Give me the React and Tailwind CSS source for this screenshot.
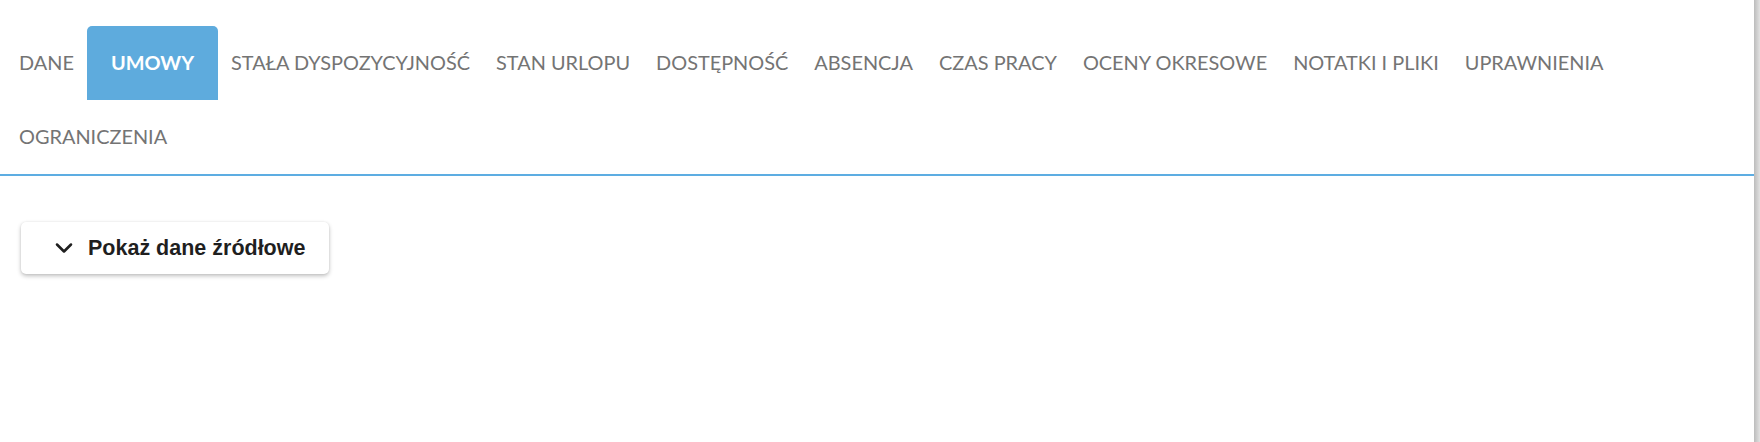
import { ChevronDown } from "lucide-react";

const tabs = [
  "DANE",
  "UMOWY",
  "STAŁA DYSPOZYCYJNOŚĆ",
  "STAN URLOPU",
  "DOSTĘPNOŚĆ",
  "ABSENCJA",
  "CZAS PRACY",
  "OCENY OKRESOWE",
  "NOTATKI I PLIKI",
  "UPRAWNIENIA",
  "OGRANICZENIA",
];

export default function App() {
  const active = "UMOWY";

  return (
    <div className="flex h-[442px] w-full bg-white font-['Lato',sans-serif]">
      <div className="flex-1 min-w-0">
        {/* Tabs */}
        <div className="pt-[26px] border-b-2 border-[#5dade2]">
          <div className="flex flex-wrap px-[6px]">
            {tabs.map((t) => (
              <button
                key={t}
                type="button"
                className={
                  t === active
                    ? "h-[74px] px-[24px] rounded-t-[5px] bg-[#5eabdd] text-white text-[19.9px] font-bold"
                    : "h-[74px] px-[13px] text-[#747474] text-[19.9px] font-normal"
                }
              >
                {t}
              </button>
            ))}
          </div>
        </div>

        {/* Content */}
        <div className="px-[21px] pt-[46px]">
          <button
            type="button"
            className="flex h-[52px] w-[308px] items-center gap-[10px] rounded-[5px] bg-white pl-[29px] shadow-[0_2px_4px_rgba(0,0,0,0.25),0_0_2px_rgba(0,0,0,0.08)] font-['Liberation_Sans',Arial,sans-serif] text-[21.5px] font-semibold text-[#1f1f1f]"
          >
            <ChevronDown className="h-[28px] w-[28px]" strokeWidth={2.2} />
            <span>Pokaż dane źródłowe</span>
          </button>
        </div>
      </div>

      {/* right edge strip */}
      <div className="w-[6px] h-full bg-gradient-to-r from-[#bcbcbc] to-[#e2e2e2]" />
    </div>
  );
}
